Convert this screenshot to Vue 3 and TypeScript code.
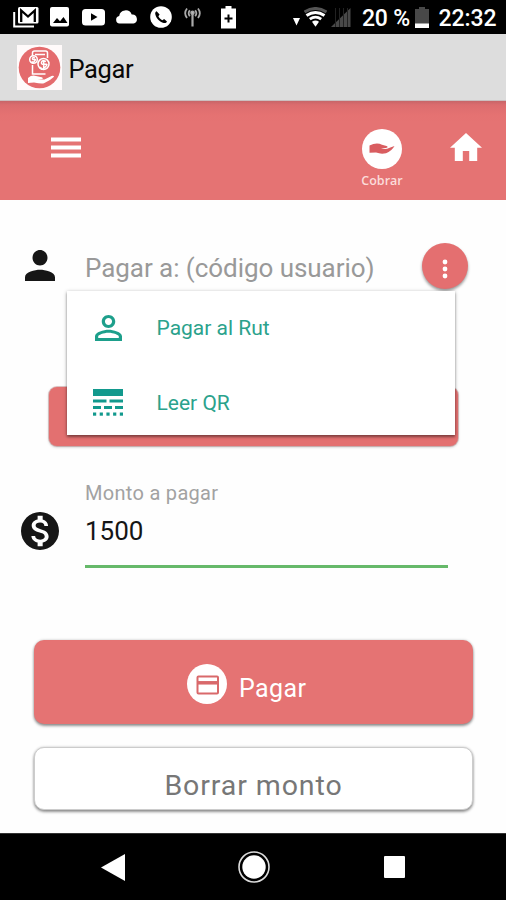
<script setup lang="ts">
import { ref } from 'vue'

const amount = ref('1500')
const menuOpen = ref(true)
const signalBars: number[] = [0, 1, 2, 3]
const dots: number[] = [0, 1, 2, 3, 4]
</script>

<template>
  <div class="screen">
    <header class="status">
      <svg class="s-mail" viewBox="13 7 26 21" width="26" height="21">
        <path d="M14.2 12v14.5H34" fill="none" stroke="#fff" stroke-width="2" />
        <rect x="18" y="7" width="20.500" height="16.500" rx="1.500" fill="#fff" />
        <path d="M21.200 22V10.500l6.800 6 6.800-6V22" fill="none" stroke="#000" stroke-width="2.300" />
      </svg>
      <svg class="s-image" viewBox="50 7.500 19 20" width="19" height="20">
        <rect x="50" y="7.500" width="19" height="19.500" rx="2" fill="#fff" />
        <path d="M53 23.500l4-5 3 3.200 3.500-4.200 4 6z" fill="#000" />
      </svg>
      <svg class="s-video" viewBox="82 9 23 17" width="23" height="17">
        <rect x="82" y="9" width="23" height="16.500" rx="3.500" fill="#fff" />
        <path d="M91 13.200v7.600l6.500-3.800z" fill="#000" />
      </svg>
      <svg class="s-cloud" viewBox="116 10 22 14" width="22" height="14">
        <path d="M119.500 23.500a3.800 3.800 0 0 1-.3-7.500 6.500 6.500 0 0 1 12.500-1.500A4.600 4.600 0 0 1 133.500 23.500z" fill="#fff" />
      </svg>
      <svg class="s-phone" viewBox="150 6 22 22" width="22" height="22">
        <circle cx="161" cy="17" r="10.800" fill="#fff" />
        <path d="M156.600 11.200c-1.200.8-1.600 1.700-1.300 3 .9 4 4.200 7.500 8.500 8.700 1.400.4 2.500-.1 3.200-1.400l-2.900-2.500-1.700 1.200c-1.900-.9-3.200-2.300-4-4l1.200-1.600z" fill="#000" />
      </svg>
      <svg class="s-antenna" viewBox="184 7 17 20" width="17" height="20" fill="none" stroke="#aaa" stroke-width="1.800">
        <path d="M187 8.500c-2.300 3-2.300 6.500 0 9.500M189.800 10.200c-1.500 2-1.500 4 0 6M198 8.500c2.300 3 2.300 6.500 0 9.500M195.200 10.200c1.500 2 1.500 4 0 6" />
        <path d="M192.500 13v13.500" stroke-width="2.200" />
        <circle cx="192.500" cy="12.800" r="1.400" fill="#ccc" />
      </svg>
      <svg class="s-charge" viewBox="221 6 15 23" width="15" height="23">
        <path d="M225.500 6h6v2.500h4.500V28.500h-15V8.500h4.500z" fill="#fff" />
        <path d="M228.500 14.500v8M224.500 18.500h8" stroke="#000" stroke-width="2" />
      </svg>
      <svg class="s-arrow" viewBox="293 18 7 8" width="7" height="8">
        <path d="M293 18h7l-3.500 7.500z" fill="#fff" />
      </svg>
      <svg class="s-wifi" viewBox="304 7 23 20" width="23" height="20" fill="none">
        <path d="M304.500 12q11-7 22 0" stroke="#555" stroke-width="3" />
        <path d="M306.500 15.500q9-6 18 0" stroke="#fff" stroke-width="3" />
        <path d="M309.800 19.200q5.700-4.200 11.400 0" stroke="#fff" stroke-width="2.800" />
        <path d="M312 21.800q3.500-2.600 7 0l-3.500 5z" fill="#fff" />
      </svg>
      <svg class="s-signal" viewBox="331 8 20 19" width="20" height="19">
        <path d="M331 27l19.500-19v19z" fill="#494949" />
        <path v-for="i in signalBars" :key="i" :d="`M${335.500 + i * 4} 8v19`" stroke="#222" />
      </svg>
      <span class="percent">20 %</span>
      <svg class="s-battery" viewBox="415 7 14 21" width="14" height="21">
        <path d="M419 7h6v2h4v15h-14V9h4z" fill="#484848" />
        <rect x="415" y="23.500" width="14" height="4.500" fill="#fff" />
      </svg>
      <span class="clock">22:32</span>
    </header>

    <div class="titlebar">
      <svg class="logo" viewBox="0 0 45 45" width="45" height="45">
        <rect width="45" height="45" fill="#fffafa" />
        <circle cx="22.500" cy="22.500" r="20.800" fill="#e46b6d" />
        <g fill="none" stroke="#fff" stroke-width="1.500">
          <path d="M15.500 11V8q0-2 2-2h11q2 0 2 2v5M15.500 20v9h13M18 9.500h10" />
          <circle cx="16.500" cy="14.500" r="3.800" fill="#e46b6d" />
          <circle cx="26.500" cy="19" r="5.500" fill="#e46b6d" />
          <path d="M29 16.500q-4-1.800-4.500.8t3.500 2-.2 3.200-4-.6M26.700 15v8M17.800 13q-2.300-1-2.300.5t2 1-.3 2-2-.4" />
        </g>
        <path d="M11 33q4-3.500 8-2l4.500 1q3 .5 2 2l-5 .4 7 .2 7-3.600q2.500-.8 2.500.8-4 4-10 6.500-3 .6-10-.8L11 38z" fill="#fff" />
      </svg>
      <h1>Pagar</h1>
    </div>

    <nav class="toolbar">
      <button class="plain burger" aria-label="Menú">
        <svg viewBox="0 0 30 21" width="30" height="21" fill="#fff">
          <path d="M0 .500h30v4H0zM0 8.500h30v4H0zM0 16.500h30v4H0z" />
        </svg>
      </button>
      <button class="plain charge">
        <svg viewBox="0 0 40 40" width="40" height="40">
          <circle cx="20" cy="20" r="20" fill="#fff" />
          <path d="M7.500 16.500q7-3.500 12.500-.8l4.500 1.300q2.500 1.300-.5 2l-5 .2q5 1.500 8-.3l5.500-2q-3 5.300-8.500 7.300-5 1.200-10-.7l-6.500.2z" fill="#d95d60" />
        </svg>
        <span>Cobrar</span>
      </button>
      <button class="plain home" aria-label="Inicio">
        <svg viewBox="2 3 20 17" width="32" height="28" preserveAspectRatio="none" fill="#fff">
          <path d="M10 20v-6h4v6h5v-8h3L12 3 2 12h3v8z" />
        </svg>
      </button>
    </nav>

    <main>
      <section class="recipient">
        <svg class="person" viewBox="4 4 16 16" width="30" height="31" preserveAspectRatio="none" fill="#161616">
          <path d="M12 12c2.210 0 4-1.790 4-4s-1.790-4-4-4-4 1.790-4 4 1.790 4 4 4zm0 2.200c-2.670 0-8 1.140-8 3.800v2h16v-2c0-2.660-5.330-3.800-8-3.800z" />
        </svg>
        <span class="placeholder">Pagar a: (código usuario)</span>
        <button class="fab" aria-label="Opciones" @click="menuOpen = !menuOpen">
          <svg viewBox="0 0 6 20" width="6" height="20" fill="#fff">
            <circle cx="3" cy="3" r="2.400" /><circle cx="3" cy="10" r="2.400" /><circle cx="3" cy="17" r="2.400" />
          </svg>
        </button>
        <div v-if="menuOpen" class="menu">
          <div class="item">
            <svg viewBox="4 4 16 16" width="27" height="26" preserveAspectRatio="none" fill="#1d9f8b">
              <path d="M12 5.900c1.160 0 2.100.94 2.100 2.100s-.94 2.100-2.100 2.100S9.900 9.160 9.900 8s.94-2.100 2.100-2.100m0 9c2.970 0 6.100 1.460 6.100 2.100v1.100H5.900V17c0-.64 3.130-2.100 6.100-2.100M12 4C9.790 4 8 5.790 8 8s1.790 4 4 4 4-1.790 4-4-1.790-4-4-4zm0 9c-2.670 0-8 1.340-8 4v3h16v-3c0-2.660-5.330-4-8-4z" />
            </svg>
            <span class="rut">Pagar al Rut</span>
          </div>
          <div class="item">
            <svg viewBox="0 0 30 27" width="30" height="27" fill="#12998d">
              <path d="M0 0h30v7H0zM0 10.500h13.500v3H0zM16.500 10.500H30v3H16.500zM0 17h8v3H0zM11 17h8v3h-8zM22 17h8v3h-8z" />
              <rect v-for="i in dots" :key="i" :x="i * 6.700" y="23.500" width="3.200" height="3.200" />
            </svg>
            <span class="qr">Leer QR</span>
          </div>
        </div>
      </section>

      <div class="covered"></div>

      <section class="amount">
        <svg viewBox="2 2 20 20" width="38" height="38" fill="#161616">
          <path d="M12 2C6.480 2 2 6.480 2 12s4.480 10 10 10 10-4.480 10-10S17.520 2 12 2zm1.410 16.090V20h-2.670v-1.930c-1.710-.36-3.160-1.460-3.270-3.400h1.960c.1 1.050.82 1.870 2.650 1.870 1.960 0 2.400-.98 2.400-1.590 0-.83-.44-1.610-2.670-2.140-2.480-.6-4.180-1.620-4.180-3.670 0-1.720 1.390-2.840 3.110-3.210V4h2.670v1.950c1.860.45 2.790 1.860 2.850 3.390H14.300c-.05-1.110-.64-1.870-2.220-1.870-1.500 0-2.400.68-2.400 1.640 0 .84.65 1.390 2.670 1.910s4.180 1.390 4.180 3.910c-.01 1.830-1.380 2.830-3.120 3.160z" stroke="#161616" stroke-width="0" />
        </svg>
        <div class="field">
          <label>Monto a pagar</label>
          <div class="value">{{ amount }}</div>
        </div>
      </section>

      <button class="pay">
        <svg viewBox="0 0 40 40" width="40" height="40">
          <circle cx="20" cy="20" r="20" fill="#fff" />
          <rect x="10.500" y="12.500" width="20.500" height="17" rx="1" fill="none" stroke="#d9696b" stroke-width="2" />
          <path d="M10 18.800h21" stroke="#d9696b" stroke-width="3.500" />
        </svg>
        <span>Pagar</span>
      </button>
      <button class="clear">Borrar monto</button>
    </main>

    <footer>
      <svg viewBox="0 0 24 27" width="24" height="27"><path d="M0 13.500L24 0v27z" fill="#fff" /></svg>
      <svg viewBox="0 0 32 32" width="32" height="32">
        <circle cx="16" cy="16" r="15" fill="none" stroke="#ddd" stroke-width="1.600" />
        <circle cx="16" cy="16" r="11.700" fill="#fff" />
      </svg>
      <svg viewBox="0 0 21 22" width="21" height="22"><rect width="21" height="22" rx="1" fill="#fff" /></svg>
    </footer>
  </div>
</template>

<style>
body { margin: 0; background: #fff; }
</style>

<style scoped>
.screen { width: 506px; height: 900px; display: flex; flex-direction: column; font-family: Roboto, "Liberation Sans", sans-serif; overflow: hidden; background: #fefefe; }
* { box-sizing: border-box; }
svg { display: block; flex: none; }
button { font-family: inherit; border: 0; padding: 0; }
.status { height: 34px; flex: none; background: #000; display: flex; align-items: center; padding-left: 13px; color: #fff; font-weight: 500; font-size: 23px; white-space: nowrap; }
.s-image { margin-left: 11px; }
.s-video { margin-left: 13px; }
.s-cloud { margin-left: 11px; }
.s-phone { margin-left: 12px; }
.s-antenna { margin-left: 12px; }
.s-charge { margin-left: 20px; }
.s-arrow { margin: 10px 0 0 57px; }
.s-wifi { margin-left: 4px; }
.s-signal { margin-left: 4px; }
.percent { width: 52px; margin-left: 11px; padding-top: 2px; letter-spacing: -.2px; }
.s-battery { margin-left: 1px; }
.clock { margin-left: 9.5px; padding-top: 2px; letter-spacing: -.1px; }
.titlebar { height: 67px; flex: none; background: #ddd; display: flex; align-items: center; padding: 1px 0 0 17px; border-bottom: 1px solid #cbbfc0; }
h1 { margin: 3px 0 0 6.5px; font-weight: 400; font-size: 25.5px; line-height: 32px; letter-spacing: -.4px; color: #080808; }
.toolbar { height: 98.5px; flex: none; background: linear-gradient(#c76568 0, #dc6c6e 4px, #e57272 14px, #e57373 22px); display: flex; align-items: flex-start; padding-left: 51px; }
.plain { background: none; color: #fff; }
.burger { margin-top: 36px; }
.charge { width: 60px; margin: 28px 0 0 271px; display: flex; flex-direction: column; align-items: center; }
.charge span { font: 600 12.5px/16px "Open Sans", sans-serif; margin-top: 4px; color: #fbdcda; }
.home { margin: 32px 0 0 38px; }
main { flex: 1; padding: 43.5px 33px 0 34px; }
.recipient { position: relative; height: 48px; display: flex; align-items: center; margin-left: -9px; }
.person { margin-top: -3px; }
.placeholder { width: 336px; margin: 1px 0 0 30px; font-size: 26px; letter-spacing: -.05px; color: #999; white-space: nowrap; }
.fab { width: 46px; height: 46px; margin: -2px 0 0 1px; border-radius: 50%; background: #e46f70; display: flex; align-items: center; justify-content: center; padding-top: 5px; box-shadow: 0 2px 3px #0006; }
.menu { position: absolute; left: 42px; top: 47.5px; width: 388px; height: 144px; background: #fff; box-shadow: 0 1px 4px #0005, 0 2px 2px #0004; padding-left: 26px; color: #2ba28c; }
.item { height: 75px; display: flex; align-items: center; }
.item:nth-child(2) { height: 74px; }
.rut, .qr { font-size: 21px; letter-spacing: 0; }
.item:first-child svg { margin-left: 2px; }
.rut { margin-left: 34.500px; }
.qr { margin-left: 33.500px; }
.covered { width: 409px; height: 59px; margin: 96px 0 0 15px; border-radius: 8px; background: #e37070; box-shadow: 0 0 0 1px #b5777766, 0 1px 3px #0004; }
.amount { display: flex; margin: 34px 0 0 -13px; height: 88px; }
.amount > svg { margin-top: 32px; }
.field { width: 363px; margin-left: 26px; border-bottom: 3px solid #66b96a; }
label { display: block; font-size: 20px; line-height: 24px; letter-spacing: .3px; margin-top: 1px; color: #a2a2a2; }
.value { font-size: 26px; line-height: 32px; margin-top: 10px; color: #151515; letter-spacing: 0; }
.pay, .clear { width: 439px; border-radius: 10px; display: flex; align-items: center; justify-content: center; box-shadow: 0 2px 3px #0006, 0 0 3px #0003; }
.pay { height: 84px; margin-top: 72px; background: #e57373; color: #fff; font-size: 25px; letter-spacing: .4px; }
.pay svg { margin: 3px 12.5px 0 -14px; }
.pay span { padding-top: 13px; }
.clear { height: 63px; margin-top: 23px; background: #fff; border: 1px solid #ccc; color: #777; font-size: 28.5px; letter-spacing: .9px; padding-top: 14px; }
footer { height: 67px; flex: none; background: #000; border-top: 1px solid #333; display: flex; align-items: center; padding-left: 101px; }
footer svg:nth-child(2) { margin-left: 113px; }
footer svg:nth-child(3) { margin-left: 114px; }
</style>
